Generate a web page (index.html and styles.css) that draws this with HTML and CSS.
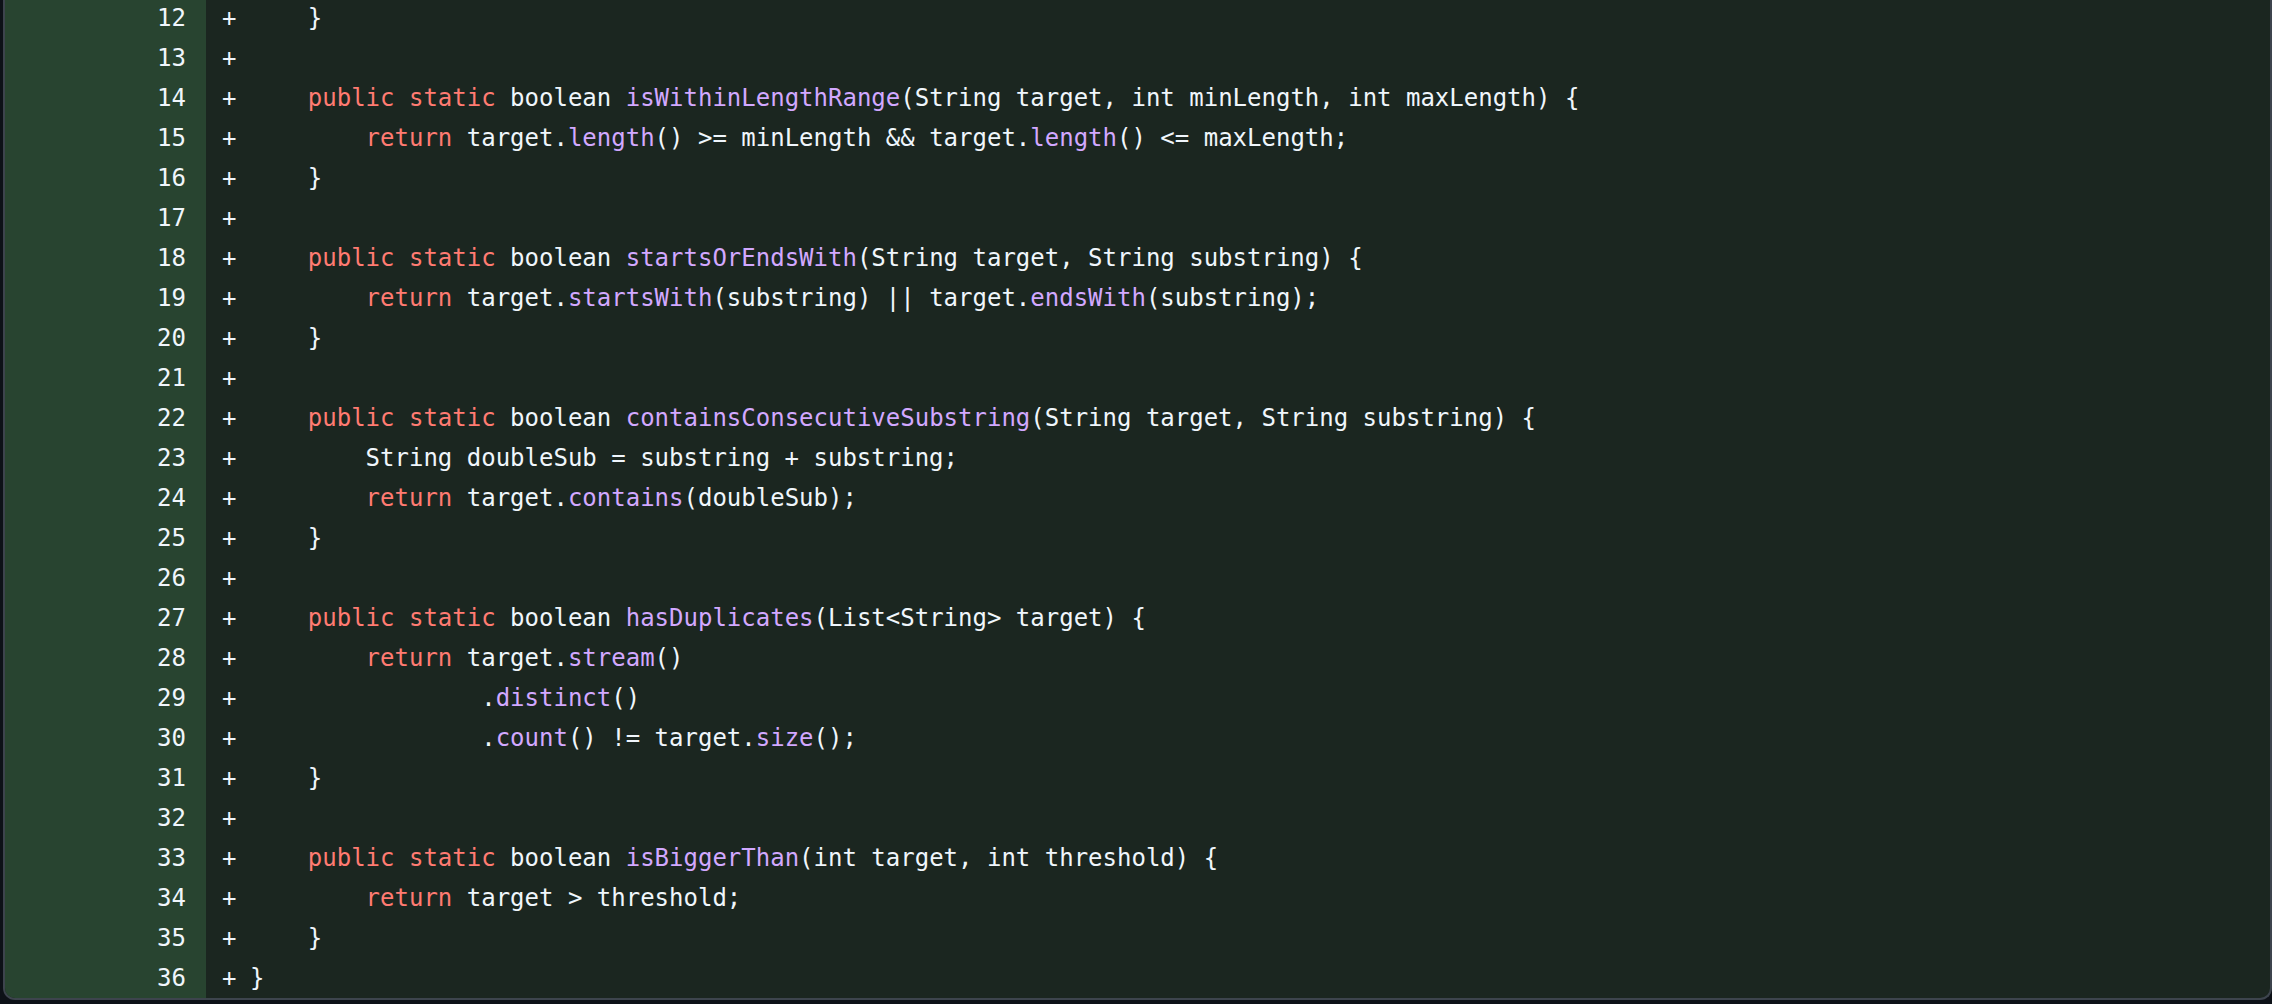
FILE: index.html
```html
<!DOCTYPE html>
<html>
<head>
<meta charset="utf-8">
<link rel="stylesheet" href="styles.css">
</head>
<body>
<div class="diff">
  <div class="row"><div class="num">12</div><div class="code">    }</div></div>
  <div class="row"><div class="num">13</div><div class="code"></div></div>
  <div class="row"><div class="num">14</div><div class="code">    <span class="k">public</span> <span class="k">static</span> boolean <span class="f">isWithinLengthRange</span>(String target, int minLength, int maxLength) {</div></div>
  <div class="row"><div class="num">15</div><div class="code">        <span class="k">return</span> target.<span class="f">length</span>() &gt;= minLength &amp;&amp; target.<span class="f">length</span>() &lt;= maxLength;</div></div>
  <div class="row"><div class="num">16</div><div class="code">    }</div></div>
  <div class="row"><div class="num">17</div><div class="code"></div></div>
  <div class="row"><div class="num">18</div><div class="code">    <span class="k">public</span> <span class="k">static</span> boolean <span class="f">startsOrEndsWith</span>(String target, String substring) {</div></div>
  <div class="row"><div class="num">19</div><div class="code">        <span class="k">return</span> target.<span class="f">startsWith</span>(substring) || target.<span class="f">endsWith</span>(substring);</div></div>
  <div class="row"><div class="num">20</div><div class="code">    }</div></div>
  <div class="row"><div class="num">21</div><div class="code"></div></div>
  <div class="row"><div class="num">22</div><div class="code">    <span class="k">public</span> <span class="k">static</span> boolean <span class="f">containsConsecutiveSubstring</span>(String target, String substring) {</div></div>
  <div class="row"><div class="num">23</div><div class="code">        String doubleSub = substring + substring;</div></div>
  <div class="row"><div class="num">24</div><div class="code">        <span class="k">return</span> target.<span class="f">contains</span>(doubleSub);</div></div>
  <div class="row"><div class="num">25</div><div class="code">    }</div></div>
  <div class="row"><div class="num">26</div><div class="code"></div></div>
  <div class="row"><div class="num">27</div><div class="code">    <span class="k">public</span> <span class="k">static</span> boolean <span class="f">hasDuplicates</span>(List&lt;String&gt; target) {</div></div>
  <div class="row"><div class="num">28</div><div class="code">        <span class="k">return</span> target.<span class="f">stream</span>()</div></div>
  <div class="row"><div class="num">29</div><div class="code">                .<span class="f">distinct</span>()</div></div>
  <div class="row"><div class="num">30</div><div class="code">                .<span class="f">count</span>() != target.<span class="f">size</span>();</div></div>
  <div class="row"><div class="num">31</div><div class="code">    }</div></div>
  <div class="row"><div class="num">32</div><div class="code"></div></div>
  <div class="row"><div class="num">33</div><div class="code">    <span class="k">public</span> <span class="k">static</span> boolean <span class="f">isBiggerThan</span>(int target, int threshold) {</div></div>
  <div class="row"><div class="num">34</div><div class="code">        <span class="k">return</span> target &gt; threshold;</div></div>
  <div class="row"><div class="num">35</div><div class="code">    }</div></div>
  <div class="row"><div class="num">36</div><div class="code">}</div></div>
</div>
</body>
</html>
```

FILE: styles.css
```css
html, body {
  margin: 0;
  padding: 0;
  background: #0d1117;
  overflow: hidden;
}

.diff {
  margin-top: -2px;
  margin-left: 3px;
  border: 2px solid #3d444d;
  border-top: none;
  border-radius: 0 0 12px 12px;
  overflow: hidden;
  background: #1b2620;
  font-family: "DejaVu Sans Mono", "Liberation Mono", monospace;
  font-size: 24px;
  line-height: 40px;
  color: #f0f6fc;
}

.row {
  display: flex;
  height: 40px;
}

.num {
  width: 201px;
  flex: none;
  box-sizing: border-box;
  padding-right: 20px;
  text-align: right;
  background: #284430;
  color: #f0f6fc;
}

.code {
  position: relative;
  flex: 1;
  padding-left: 44px;
  white-space: pre;
}

.code::before {
  content: "+";
  position: absolute;
  left: 16px;
  top: 0;
}

.k { color: #ff7b72; }
.f { color: #d2a8ff; }
```
